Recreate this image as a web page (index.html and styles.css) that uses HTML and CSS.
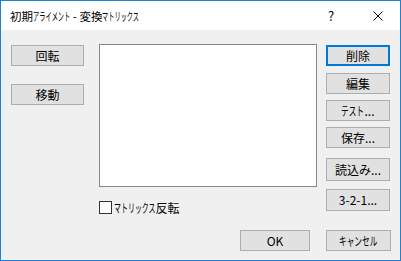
FILE: index.html
```html
<!DOCTYPE html>
<html lang="ja">
<head>
    <meta charset="UTF-8">
    <title>初期アライメント - 変換マトリックス</title>
    <link rel="stylesheet" href="styles.css">
</head>
<body>
    <div class="window">
        <div class="titlebar">
            <span class="title">初期<span class="kana n6">アライメント</span> - 変換<span class="kana n6">マトリックス</span></span>
            <span class="help">?</span>
            <span class="close">
                <svg width="10" height="10" viewBox="0 0 10 10">
                    <path d="M0.5 0.5 L9.5 9.5 M9.5 0.5 L0.5 9.5" stroke="#000" stroke-width="1" fill="none"/>
                </svg>
            </span>
        </div>

        <div class="content">
            <div class="main">
                <div class="col-left">
                    <button class="btn">回転</button>
                    <button class="btn">移動</button>
                </div>

                <div class="col-mid">
                    <div class="listbox"></div>
                    <label class="check">
                        <span class="box"></span>
                        <span><span class="kana n6">マトリックス</span>反転</span>
                    </label>
                </div>

                <div class="col-right">
                    <button class="btn default">削除</button>
                    <button class="btn">編集</button>
                    <button class="btn"><span class="kana n3">テスト</span>...</button>
                    <button class="btn">保存...</button>
                    <button class="btn b-load">読込み...</button>
                    <button class="btn b-321">3-2-1...</button>
                </div>
            </div>

            <div class="footer">
                <button class="btn ok">OK</button>
                <button class="btn cancel"><span class="kana n5">キャンセル</span></button>
            </div>
        </div>
    </div>
</body>
</html>
```

FILE: styles.css
```css
* {
    box-sizing: border-box;
}

body {
    margin: 0;
    font-family: "Noto Sans CJK JP", "Noto Sans", sans-serif;
    font-size: 12px;
    color: #000;
    background: #fff;
}

/* the dialog's UI font draws katakana narrow: squeeze them, and give the space back */
.kana {
    --s: 0.64;
    --n: 1;
    display: inline-block;
    transform: scaleX(var(--s));
    transform-origin: 0 50%;
    margin-right: calc(-1em * var(--n) * (1 - var(--s)));
}

.n3 { --n: 3; }
.n5 { --n: 5; }
.n6 { --n: 6; }

.window {
    width: 401px;
    height: 261px;
    border: 1px solid #1883d7;
    display: flex;
    flex-direction: column;
    background: #f0f0f0;
}

.titlebar {
    height: 29px;
    background: #fff;
    display: flex;
    align-items: center;
    padding-left: 9px;
}

.title {
    flex: 1;
    font-size: 11.5px;
    line-height: 14px;
}

.title .kana {
    --s: 0.54;
}

.help {
    width: 8px;
    margin-right: 37px;
    font-size: 13px;
    line-height: 14px;
}

.close {
    display: flex;
    margin-right: 17px;
}

.content {
    flex: 1;
    display: flex;
    flex-direction: column;
    padding: 14px 9px 9px 10px;
}

.main {
    display: flex;
    align-items: flex-start;
}

.btn {
    font-family: inherit;
    font-size: 12px;
    color: #000;
    background: #e1e1e1;
    border: 1px solid #adadad;
    padding: 0;
    height: 21px;
    line-height: 19px;
    display: block;
}

.btn.default {
    border: 2px solid #0078d7;
    line-height: 17px;
}

.col-left {
    width: 73px;
    padding-top: 1px;
    display: flex;
    flex-direction: column;
    gap: 18px;
}

.col-left .btn {
    width: 73px;
}

.col-mid {
    margin-left: 15px;
    width: 218px;
}

.listbox {
    width: 218px;
    height: 143px;
    background: #fff;
    border: 1px solid #828790;
}

.check {
    display: flex;
    align-items: center;
    margin-top: 14px;
    line-height: 13px;
}

.check .kana {
    --s: 0.58;
}

.check .box {
    width: 13px;
    height: 13px;
    border: 1px solid #333;
    background: #fff;
    margin-right: 2px;
}

.col-right {
    margin-left: 9px;
    padding-top: 1px;
    width: 64px;
    display: flex;
    flex-direction: column;
    gap: 6px;
}

.col-right .btn {
    width: 64px;
}

.col-right .default {
    margin-bottom: 1px;
}

.b-load {
    margin-top: 4px;
    height: 23px;
    line-height: 21px;
}

.b-321 {
    margin-top: 2px;
    height: 22px;
    line-height: 20px;
}

.footer {
    margin-top: auto;
    display: flex;
    justify-content: flex-end;
    gap: 16px;
}

.ok {
    width: 70px;
}

.cancel {
    width: 65px;
}
```
